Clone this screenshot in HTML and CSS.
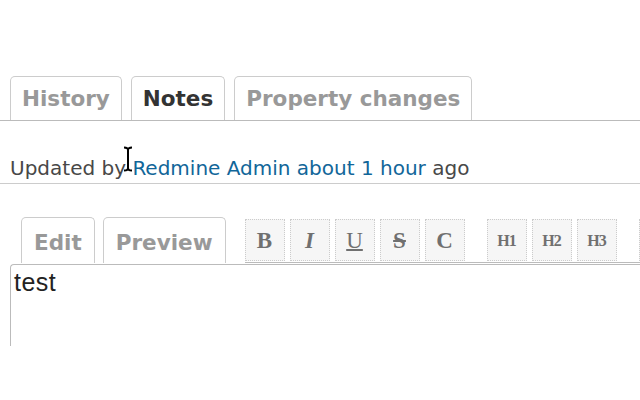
FILE: index.html
```html
<!DOCTYPE html>
<html>
<head>
  <title>Issue journal</title>
  <link rel="stylesheet" href="styles.css">
</head>
<body>

  <div class="page">
    <div class="tabs">
      <a class="tab">History</a>
      <a class="tab selected">Notes</a>
      <a class="tab">Property changes</a>
    </div>

    <h4 class="journal-head">
      Updated by <a class="link">Redmine Admin</a> <a class="link">about 1 hour</a> ago
    </h4>

    <div class="editor">
      <div class="editor-bar">
        <div class="editor-tabs">
          <a class="etab">Edit</a>
          <a class="etab">Preview</a>
        </div>
        <div class="toolbar">
          <span class="tb-btn">B</span>
          <span class="tb-btn ital">I</span>
          <span class="tb-btn under">U</span>
          <span class="tb-btn strike">S</span>
          <span class="tb-btn">C</span>
          <span class="tb-space"></span>
          <span class="tb-btn head">H1</span>
          <span class="tb-btn head">H2</span>
          <span class="tb-btn head">H3</span>
          <span class="tb-space"></span>
          <span class="tb-btn"></span>
        </div>
      </div>
      <div class="notes-area">test</div>
    </div>

    <!-- text cursor over the page -->
    <svg class="cursor" width="12" height="26" viewBox="0 0 12 26">
      <path d="M2 1.5 Q6 1.5 6 4 Q6 1.5 10 1.5 M6 4 V22 M2 24.5 Q6 24.5 6 22 Q6 24.5 10 24.5" fill="none" stroke="#000" stroke-width="2"/>
    </svg>
  </div>

</body>
</html>
```

FILE: styles.css
```css
/* zoomed redmine journal */
body {
  margin: 0;
  background: #fff;
  font-family: "DejaVu Sans", Verdana, sans-serif;
  color: #484848;
}
.page {
  position: relative;
  width: 640px;
  height: 400px;
  overflow: hidden;
}

/* top tabs */
.tabs {
  display: flex;
  gap: 9px;
  margin-top: 76px;
  padding-left: 10px;
  border-bottom: 1px solid #bbb;
}
.tab {
  display: block;
  height: 43px;
  line-height: 44px;
  padding: 0 11px;
  border: 1px solid #ccc;
  border-bottom: none;
  border-radius: 5px 5px 0 0;
  font-size: 21.5px;
  font-weight: bold;
  color: #999;
}
.tab.selected {
  color: #333;
}

/* journal header */
.journal-head {
  margin: 0;
  padding: 35px 0 2px 10px;
  font-size: 20px;
  line-height: 25px;
  font-weight: normal;
  color: #484848;
  border-bottom: 1px solid #ccc;
}
.link {
  color: #169;
}

/* editor */
.editor {
  margin-top: 33px;
}
.editor-bar {
  display: flex;
  align-items: flex-end;
}
.editor-tabs {
  display: flex;
  gap: 8px;
  padding-left: 21px;
  margin-right: 19px;
}
.etab {
  display: block;
  height: 45px;
  line-height: 50px;
  padding: 0 12px;
  border: 1px solid #ccc;
  border-bottom: none;
  border-radius: 5px 5px 0 0;
  font-size: 21.5px;
  font-weight: bold;
  color: #999;
}
.toolbar {
  display: flex;
  gap: 5px;
  flex: 1;
  padding-bottom: 1px;
  border-bottom: 1px solid #bbb;
  white-space: nowrap;
}
.tb-btn {
  flex: none;
  width: 38px;
  height: 40px;
  line-height: 42px;
  text-align: center;
  background: #f6f6f6;
  border: 1px dotted #ccc;
  font-family: "Liberation Serif", serif;
  font-weight: bold;
  font-size: 23px;
  color: #707070;
}
.tb-btn.ital {
  font-style: italic;
}
.tb-btn.under {
  text-decoration: underline;
  text-decoration-thickness: 2px;
  font-weight: normal;
}
.tb-btn.strike {
  text-decoration: line-through;
  text-decoration-thickness: 2px;
}
.tb-btn.head {
  font-size: 16px;
  letter-spacing: -1px;
}
.tb-space {
  flex: none;
  width: 12px;
}
.notes-area {
  margin: 1px 0 0 10px;
  height: 75px;
  padding: 3px 3px;
  border-top: 1px solid #bbb;
  border-left: 1px solid #bbb;
  border-top-left-radius: 4px;
  font-family: "Liberation Sans", Arial, sans-serif;
  font-size: 25px;
  letter-spacing: 0.5px;
  color: #222;
}

.cursor {
  position: absolute;
  left: 122px;
  top: 146px;
}
```
